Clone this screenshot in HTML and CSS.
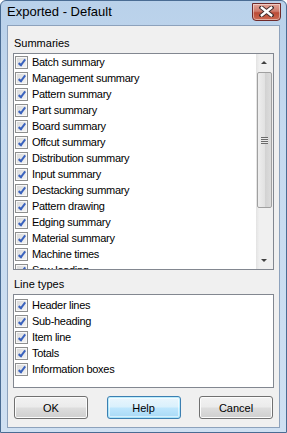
FILE: index.html
```html
<!DOCTYPE html>
<html lang="en">
<head>
  <meta charset="UTF-8" />
  <title>Exported - Default</title>
  <link rel="stylesheet" href="styles.css">
</head>
<body>

  <div class="window">
    <div class="titlebar">
      <span class="title">Exported - Default</span>
      <button class="close" title="Close">
        <svg width="15" height="11" viewBox="0 0 15 11">
          <path d="M2.5 1.5 L12.5 9.5 M12.5 1.5 L2.5 9.5" stroke="#3b2a2a" stroke-width="4.2" stroke-linecap="square"/>
          <path d="M2.8 1.8 L12.2 9.2 M12.2 1.8 L2.8 9.2" stroke="#ffffff" stroke-width="2.4" stroke-linecap="square"/>
        </svg>
      </button>
    </div>

    <div class="client">
      <div class="label">Summaries</div>
      <div class="listbox summaries">
        <div class="items">
          <div class="item"><span class="check"></span>Batch summary</div>
          <div class="item"><span class="check"></span>Management summary</div>
          <div class="item"><span class="check"></span>Pattern summary</div>
          <div class="item"><span class="check"></span>Part summary</div>
          <div class="item"><span class="check"></span>Board summary</div>
          <div class="item"><span class="check"></span>Offcut summary</div>
          <div class="item"><span class="check"></span>Distribution summary</div>
          <div class="item"><span class="check"></span>Input summary</div>
          <div class="item"><span class="check"></span>Destacking summary</div>
          <div class="item"><span class="check"></span>Pattern drawing</div>
          <div class="item"><span class="check"></span>Edging summary</div>
          <div class="item"><span class="check"></span>Material summary</div>
          <div class="item"><span class="check"></span>Machine times</div>
          <div class="item"><span class="check"></span>Saw loading</div>
        </div>
        <div class="scrollbar">
          <div class="arrow up"></div>
          <div class="track">
            <div class="thumb"><span class="grip"></span></div>
          </div>
          <div class="arrow down"></div>
        </div>
      </div>

      <div class="label second">Line types</div>
      <div class="listbox linetypes">
        <div class="items">
          <div class="item"><span class="check"></span>Header lines</div>
          <div class="item"><span class="check"></span>Sub-heading</div>
          <div class="item"><span class="check"></span>Item line</div>
          <div class="item"><span class="check"></span>Totals</div>
          <div class="item"><span class="check"></span>Information boxes</div>
        </div>
      </div>

      <div class="buttons">
        <button class="btn">OK</button>
        <button class="btn default">Help</button>
        <button class="btn">Cancel</button>
      </div>
    </div>
  </div>

</body>
</html>
```

FILE: styles.css
```css
body {
  margin: 0;
  background: #ffffff;
  font-family: 'Liberation Sans', Arial, sans-serif;
}

.window {
  width: 287px;
  height: 433px;
  box-sizing: border-box;
  border: 1px solid #4a6c93;
  border-radius: 6px 6px 0 0;
  background: linear-gradient(to bottom, #b9d1ea 0%, #c6daef 30%, #cfe0f2 100%);
  display: flex;
  flex-direction: column;
  padding: 0 6px 4px 6px;
}

.titlebar {
  height: 24px;
  display: flex;
  align-items: center;
}

.title {
  font-size: 13px;
  color: #000000;
  margin-top: -3px;
}

.close {
  margin-left: auto;
  margin-right: -1px;
  margin-top: -3px;
  width: 29px;
  height: 18px;
  padding: 0;
  border: 1px solid #6f2a2a;
  border-radius: 0 0 4px 4px;
  background: linear-gradient(to bottom, #e3a396 0%, #cf7c6d 45%, #bb4b36 55%, #cc6a52 100%);
  box-shadow: inset 0 0 0 1px rgba(255, 255, 255, 0.45);
  display: flex;
  align-items: center;
  justify-content: center;
}

.client {
  flex: 1;
  background: #f0f0f0;
  border: 1px solid #8da2bc;
  padding: 10px 5px 0 5px;
  display: flex;
  flex-direction: column;
  font-size: 11px;
  color: #000000;
}

.label {
  height: 14px;
  line-height: 14px;
  padding-left: 1px;
  margin-bottom: 3px;
}

.label.second {
  margin-top: 7px;
}

.listbox {
  background: #ffffff;
  border: 1px solid #828790;
  display: flex;
  overflow: hidden;
}

.summaries {
  height: 215px;
}

.linetypes {
  height: 92px;
}

.items {
  flex: 1;
  overflow: hidden;
  letter-spacing: -0.3px;
}

.linetypes .items {
  padding-top: 2px;
}

.item {
  height: 16px;
  display: flex;
  align-items: center;
  padding-left: 1px;
  white-space: nowrap;
}

.check {
  width: 11px;
  height: 11px;
  border: 1px solid #8e8f8f;
  background: linear-gradient(135deg, #d8d8d8 0%, #f4f4f4 100%);
  box-shadow: inset 0 0 0 1px #f8f8f8;
  margin-right: 4px;
  position: relative;
  flex-shrink: 0;
}

.check::after {
  content: '';
  position: absolute;
  left: 4px;
  top: 1px;
  width: 2px;
  height: 6px;
  border-right: 2px solid #3a62bd;
  border-bottom: 2px solid #3a62bd;
  transform: rotate(38deg);
}

.scrollbar {
  width: 17px;
  display: flex;
  flex-direction: column;
  background: linear-gradient(to right, #e3e3e3 0%, #f0f0f0 20%, #f0f0f0 100%);
}

.arrow {
  height: 17px;
  position: relative;
}

.arrow::after {
  content: '';
  position: absolute;
  left: 5px;
  width: 0;
  height: 0;
  border-left: 3px solid transparent;
  border-right: 3px solid transparent;
}

.arrow.up::after {
  top: 7px;
  border-bottom: 3px solid #404040;
}

.arrow.down::after {
  top: 7px;
  border-top: 3px solid #404040;
}

.track {
  flex: 1;
  padding-top: 1px;
}

.thumb {
  margin-left: 1px;
  width: 13px;
  height: 134px;
  border: 1px solid #a0a0a0;
  border-radius: 2px;
  background: linear-gradient(to right, #eeeeee 0%, #e2e2e2 50%, #d2d2d2 55%, #dcdcdc 100%);
  display: flex;
  align-items: center;
  justify-content: center;
}

.grip {
  width: 7px;
  height: 7px;
  background: repeating-linear-gradient(to bottom, #6a6a6a 0, #6a6a6a 1px, #e8e8e8 1px, #e8e8e8 2px);
}

.buttons {
  display: flex;
  justify-content: space-between;
  padding: 0 1px;
  margin-top: 8px;
}

.btn {
  width: 74px;
  height: 23px;
  padding: 0;
  font-family: 'Liberation Sans', Arial, sans-serif;
  font-size: 11px;
  color: #000000;
  border: 1px solid #707070;
  border-radius: 3px;
  background: linear-gradient(to bottom, #f2f2f2 0%, #ebebeb 48%, #dddddd 52%, #cfcfcf 100%);
  box-shadow: inset 0 0 0 1px #fcfcfc;
}

.btn.default {
  border-color: #3c7fb1;
  background: linear-gradient(to bottom, #eaf6fd 0%, #d9f0fc 48%, #bee6fd 52%, #a7d9f5 100%);
  box-shadow: inset 0 0 0 1px #48d2fd55, inset 0 0 0 2px #ffffff88;
}
```
